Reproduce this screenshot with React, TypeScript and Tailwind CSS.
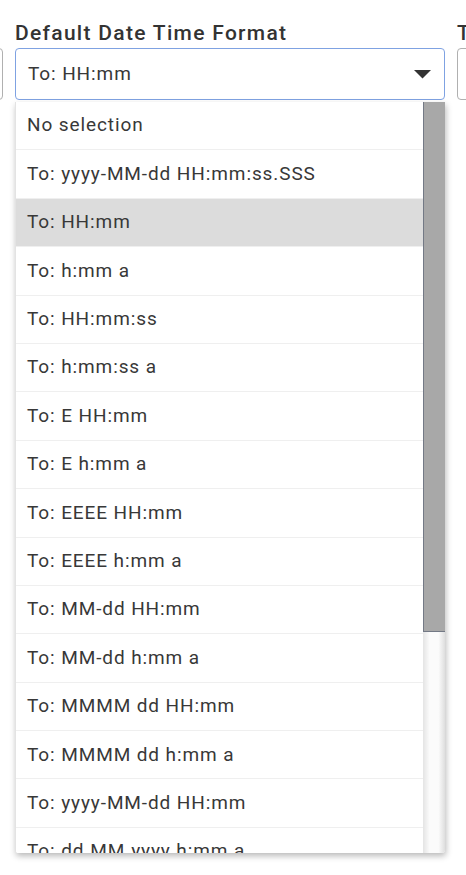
import React from "react";

const items = [
  "No selection",
  "To: yyyy-MM-dd HH:mm:ss.SSS",
  "To: HH:mm",
  "To: h:mm a",
  "To: HH:mm:ss",
  "To: h:mm:ss a",
  "To: E HH:mm",
  "To: E h:mm a",
  "To: EEEE HH:mm",
  "To: EEEE h:mm a",
  "To: MM-dd HH:mm",
  "To: MM-dd h:mm a",
  "To: MMMM dd HH:mm",
  "To: MMMM dd h:mm a",
  "To: yyyy-MM-dd HH:mm",
  "To: dd.MM.yyyy h:mm a",
];

export default function App() {
  return (
    <div
      className="w-[466px] h-[875px] overflow-hidden bg-white text-[#333333]"
      style={{ fontFamily: "Roboto, 'Liberation Sans', sans-serif" }}
    >
      <div className="flex gap-[12px] pt-[21px] ml-[-97px]">
        {/* left partial field */}
        <div className="w-[100px] shrink-0 flex flex-col gap-[3px]">
          <div className="h-[24px]" />
          <div className="h-[52px] border border-[#b0b0b0] rounded-[4px]" />
        </div>

        {/* main field */}
        <div className="w-[430px] shrink-0 flex flex-col gap-[3px]">
          <div className="h-[24px] leading-[24px] text-[21px] font-medium tracking-[1.3px] text-[#333333] whitespace-nowrap">
            Default Date Time Format
          </div>
          <div className="h-[52px] border border-[#7fa2e2] rounded-[4px] flex items-center justify-between pl-[12px] pr-[13px]">
            <span className="text-[19px] tracking-[0.9px] text-[#383838]">To: HH:mm</span>
            <svg width="17" height="9" viewBox="0 0 17 9">
              <path d="M0 0 L17 0 L8.5 8.5 Z" fill="#333333" />
            </svg>
          </div>
          <div className="h-[751px] mt-[-1px] flex bg-white border-l border-[#e3e3e3] shadow-[1px_3px_6px_rgba(0,0,0,0.28)] rounded-b-[3px] overflow-hidden">
            <div className="flex-1 flex flex-col">
              {items.map((t, i) => (
                <div
                  key={t}
                  className={`h-[48.4px] shrink-0 flex items-center pl-[11px] text-[19px] tracking-[0.9px] text-[#383838] whitespace-nowrap border-b border-[#efefef] ${
                    i === 2 ? "bg-[#dcdcdc]" : "bg-white"
                  }`}
                >
                  {t}
                </div>
              ))}
            </div>
            <div className="w-[22px] shrink-0 flex flex-col bg-[linear-gradient(to_right,#e4e4e4,#fbfbfb_30%,#fbfbfb_70%,#dedede)]">
              <div className="h-[530px] bg-[#a8a8a8] border-l border-b border-[#737985]" />
            </div>
          </div>
        </div>

        {/* right partial field */}
        <div className="w-[100px] shrink-0 flex flex-col gap-[3px]">
          <div className="h-[24px] leading-[24px] text-[21px] font-medium whitespace-nowrap">To</div>
          <div className="h-[52px] border border-[#b0b0b0] rounded-[4px]" />
        </div>
      </div>
    </div>
  );
}
